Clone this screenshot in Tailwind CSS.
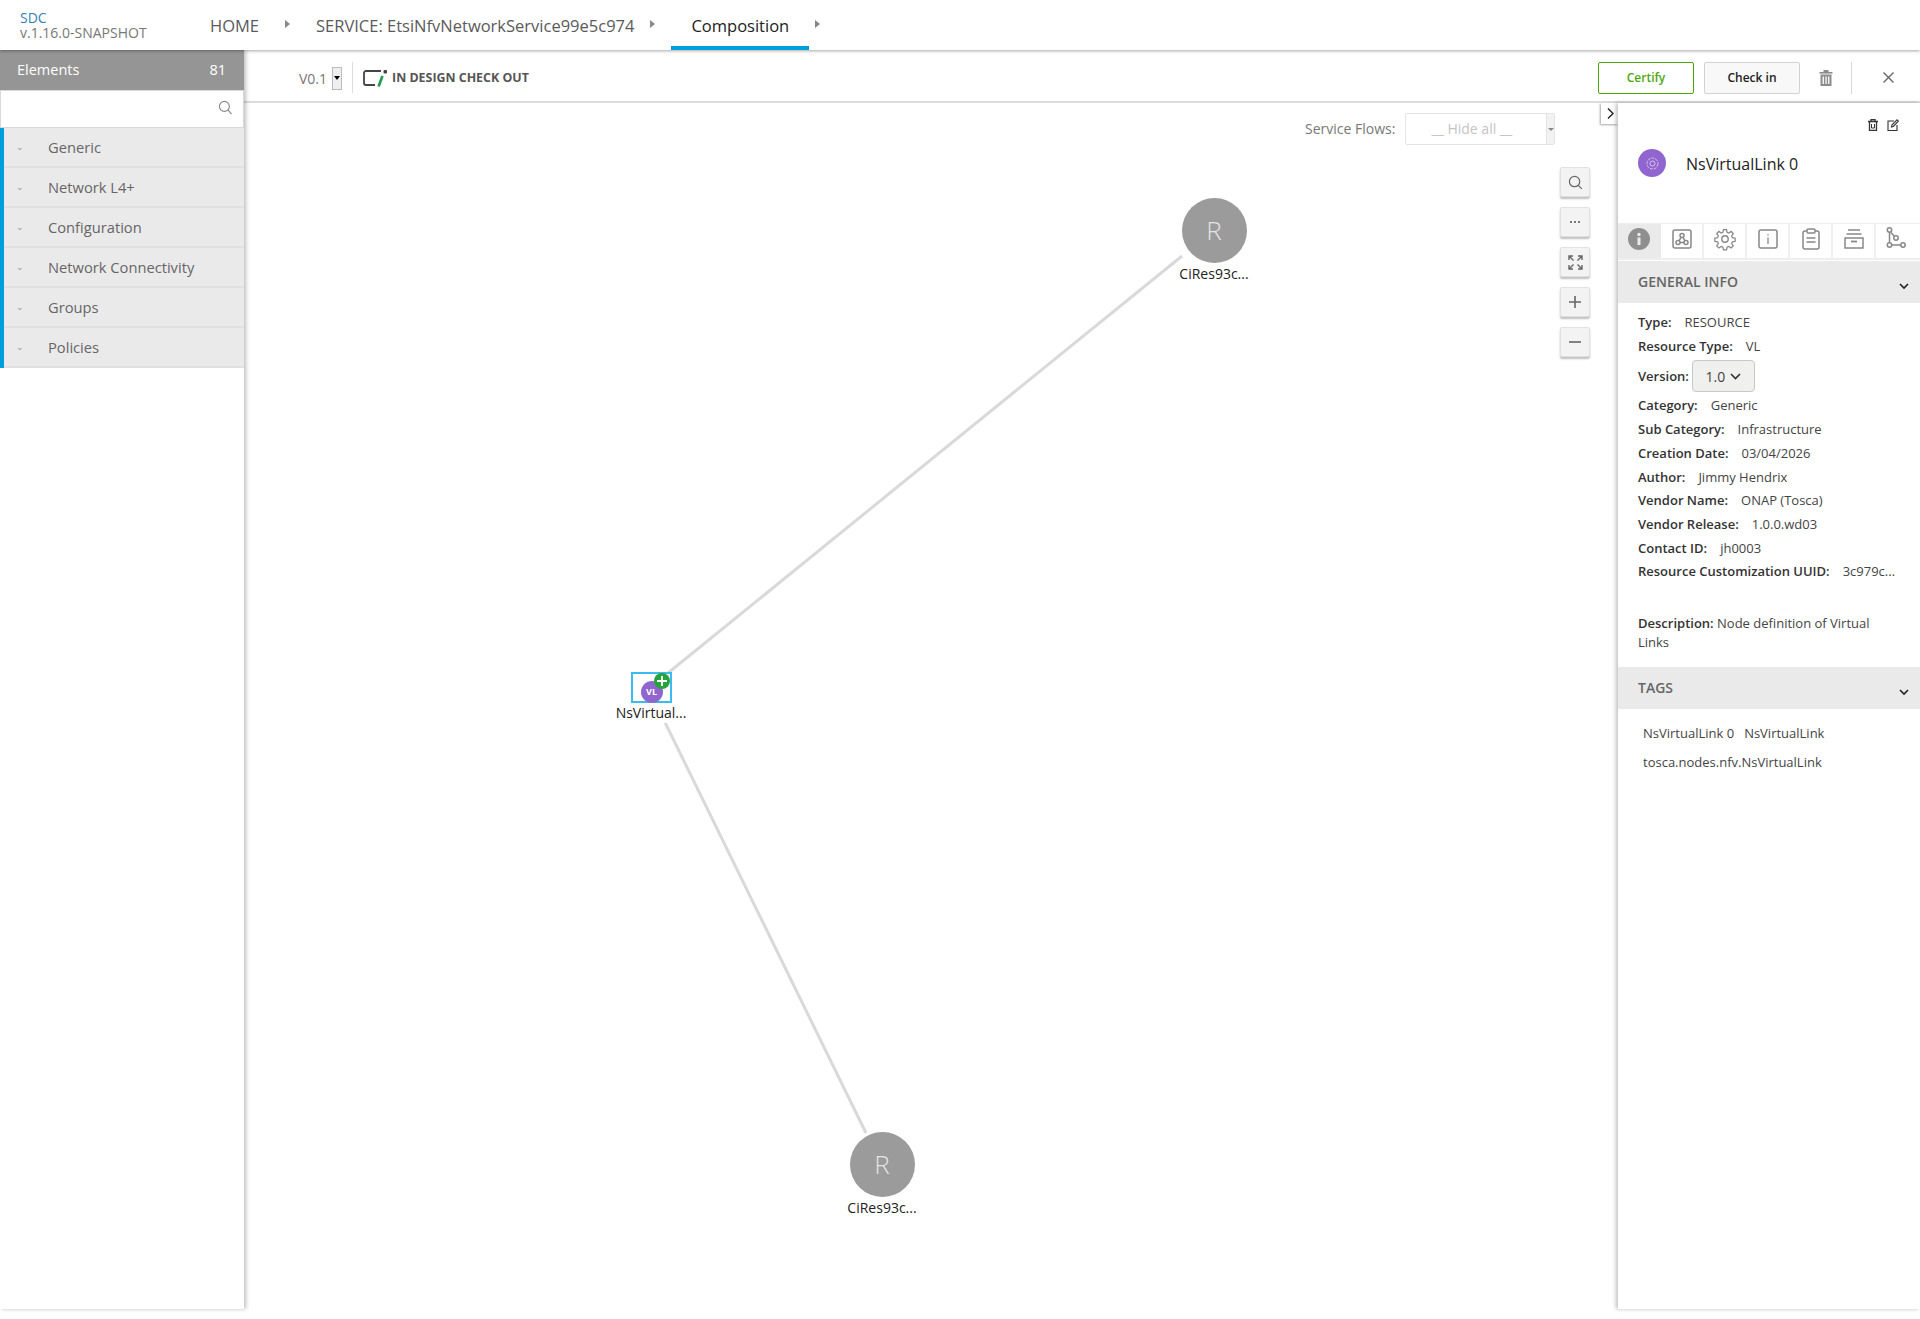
<!DOCTYPE html>
<html lang="en">
<head>
    <meta charset="UTF-8">
    <title>SDC - Composition</title>
    <script src="https://cdn.jsdelivr.net/npm/@tailwindcss/browser@4"></script>
</head>
<body class="bg-white font-['Open_Sans',sans-serif] text-[13px] text-[#333] h-[1319px] overflow-hidden">
    <!-- top nav -->
    <header class="relative z-20 h-[50px] bg-white shadow-[0_1px_3px_rgba(0,0,0,0.35)] flex items-stretch">
        <div class="w-[210px] pl-[20px] pt-[10px] text-[14px] leading-[15px]">
            <div class="text-[#3a7fb8]">SDC</div>
            <div class="text-[#777]">v.1.16.0-SNAPSHOT</div>
        </div>
        <nav class="flex items-stretch text-[16.5px] text-[#5a5a5a]">
            <div class="flex items-center h-full pt-[2px]">HOME</div>
            <div class="w-[57px] flex justify-center pt-[20px]"><div class="w-0 h-0 border-y-[4px] border-y-transparent border-l-[5px] border-l-[#888] -ml-[1px]"></div></div>
            <div class="flex items-center h-full pt-[2px]">SERVICE: EtsiNfvNetworkService99e5c974</div>
            <div class="w-[37px] flex justify-center pt-[20px]"><div class="w-0 h-0 border-y-[4px] border-y-transparent border-l-[5px] border-l-[#888]"></div></div>
            <div class="flex items-center h-full pt-[6px] px-[20px] border-b-[4px] border-[#009fdb] text-[#222] font-medium">Composition</div>
            <div class="w-[16px] flex justify-center pt-[20px]"><div class="w-0 h-0 border-y-[4px] border-y-transparent border-l-[5px] border-l-[#888]"></div></div>
        </nav>
    </header>

    <div class="flex h-[1259px]">
        <!-- palette -->
        <aside class="relative z-10 w-[244px] shrink-0 bg-white shadow-[2px_0_4px_rgba(0,0,0,0.25)]">
            <div class="h-[40px] bg-[#959595] text-white text-[14.5px] font-medium flex items-center justify-between pl-[17px] pr-[18px] pb-[1px]">
                <span>Elements</span><span>81</span>
            </div>
            <div class="h-[38px] border border-[#d8d8d8] flex items-center justify-end pr-[10px] pb-[4px]">
                <svg class="w-[15px] h-[15px] text-[#888]" viewBox="0 0 16 16" fill="none" stroke="currentColor" stroke-width="1.2"><circle cx="6.8" cy="6.8" r="5.3"/><path d="M10.6 10.6 14.5 15"/></svg>
            </div>
            <ul class="text-[14.7px] font-medium text-[#666] border-l-[4px] border-[#009fdb]">
                <li class="h-[40px] bg-[#eaeaea] border-b-2 border-[#e0e0e0] flex items-center"><span class="w-[44px] pl-[12px] text-[#999] text-[9px]">⌄</span>Generic</li>
                <li class="h-[40px] bg-[#eaeaea] border-b-2 border-[#e0e0e0] flex items-center"><span class="w-[44px] pl-[12px] text-[#999] text-[9px]">⌄</span>Network L4+</li>
                <li class="h-[40px] bg-[#eaeaea] border-b-2 border-[#e0e0e0] flex items-center"><span class="w-[44px] pl-[12px] text-[#999] text-[9px]">⌄</span>Configuration</li>
                <li class="h-[40px] bg-[#eaeaea] border-b-2 border-[#e0e0e0] flex items-center"><span class="w-[44px] pl-[12px] text-[#999] text-[9px]">⌄</span>Network Connectivity</li>
                <li class="h-[40px] bg-[#eaeaea] border-b-2 border-[#e0e0e0] flex items-center"><span class="w-[44px] pl-[12px] text-[#999] text-[9px]">⌄</span>Groups</li>
                <li class="h-[40px] bg-[#eaeaea] border-b-2 border-[#e0e0e0] flex items-center"><span class="w-[44px] pl-[12px] text-[#999] text-[9px]">⌄</span>Policies</li>
            </ul>
        </aside>

        <div class="flex-1 flex flex-col min-w-0">
            <!-- toolbar -->
            <div class="h-[53px] shrink-0 border-b-2 border-[#dcdcdc] flex items-center pt-[4px] pl-[55px] pr-[26px]">
                <span class="text-[14px] text-[#777] pt-[1px]">V0.1</span>
                <div class="ml-[5px] mt-[1px] w-[10px] h-[23px] bg-[#efefef] border border-[#bbb] flex items-center justify-center"><div class="w-0 h-0 border-x-[3px] border-x-transparent border-t-[4px] border-t-black"></div></div>
                <div class="ml-[10px] w-px h-[31px] bg-[#ddd]"></div>
                <svg class="ml-[10px] mt-[1px] w-[25px] h-[18px]" viewBox="0 0 25 18" fill="none"><path d="M18 2H3a2 2 0 0 0-2 2v10a2 2 0 0 0 2 2h9" stroke="#444" stroke-width="1.8"/><path d="M19.500 7 15.500 17.500" stroke="#1f9a4c" stroke-width="2.600"/><rect x="20.500" y="1" width="3.500" height="3.500" rx="1" fill="#444"/></svg>
                <span class="ml-[4px] pt-[2px] text-[12.4px] font-bold text-[#555]">IN DESIGN CHECK OUT</span>
                <div class="ml-auto flex items-center">
                    <button class="w-[96px] h-[32px] pt-[1px] border border-[#4ca90c] rounded-[2px] text-[#4ca90c] text-[12px] font-semibold">Certify</button>
                    <button class="ml-[10px] w-[96px] h-[32px] pt-[1px] bg-[#f8f8f8] border border-[#d2d2d2] rounded-[2px] text-[#222] text-[12px] font-semibold">Check in</button>
                    <svg class="ml-[19px] w-[14px] h-[16px] text-[#8c8c8c]" viewBox="0 0 14 16" fill="currentColor"><rect x="0.5" y="2" width="13" height="1.6"/><rect x="4.5" y="0" width="5" height="2.2"/><path d="M1.5 4.5h11V16h-11zM3.6 6.5v7.6h1.3V6.5zM6.4 6.500v7.6h1.3V6.500zM9.1 6.500v7.6h1.3V6.500z" fill-rule="evenodd"/></svg>
                    <div class="ml-[18px] w-px h-[32px] bg-[#d8d8d8]"></div>
                    <svg class="ml-[31px] w-[11px] h-[11px] text-[#666]" viewBox="0 0 11 11" fill="none" stroke="currentColor" stroke-width="1.4"><path d="M.5.5l10 10M10.500.5l-10 10"/></svg>
                </div>
            </div>

            <div class="flex-1 flex min-h-0">
                <!-- canvas -->
                <main class="relative flex-1 min-w-0">
                    <svg class="absolute inset-0 w-[1374px] h-[1206px]" viewBox="244 103 1374 1206">
                        <path d="M668 673 1182 256M657 706 866 1133" stroke="#d9d9d9" stroke-width="3" fill="none"/>
                    </svg>

                    <div class="absolute left-[1061px] top-[10px] w-[250px] flex items-center text-[14px] text-[#777]">
                        <span class="w-[100px] pb-[1px]">Service Flows:</span>
                        <div class="relative w-[151px] h-[32px] border border-[#e4e4e4] rounded-[2px] text-[#c4c4c4] flex items-center pl-[26px] pb-[1px]">__ Hide all __
                            <div class="absolute right-0 top-0 bottom-0 w-[8px] bg-[#f2f2f2] border-l border-[#e4e4e4] flex items-center justify-center"><div class="w-0 h-0 border-x-[3px] border-x-transparent border-t-[3px] border-t-[#888]"></div></div>
                        </div>
                    </div>

                    <!-- zoom controls -->
                    <div class="absolute left-[1316px] top-[64px] flex flex-col gap-[10px] text-[#666]">
                        <div class="w-[30px] h-[30px] bg-[#f3f3f3] border border-[#e2e2e2] rounded-[2px] shadow-[0_2px_2px_rgba(0,0,0,0.25)] flex items-center justify-center">
                            <svg class="w-[15px] h-[15px]" viewBox="0 0 16 16" fill="none" stroke="currentColor" stroke-width="1.3"><circle cx="7" cy="7" r="5.5"/><path d="M11 11l3.8 3.8"/></svg>
                        </div>
                        <div class="w-[30px] h-[30px] bg-[#f3f3f3] border border-[#e2e2e2] rounded-[2px] shadow-[0_2px_2px_rgba(0,0,0,0.25)] flex items-center justify-center gap-[2px]">
                            <span class="w-[2px] h-[2px] bg-[#777]"></span><span class="w-[2px] h-[2px] bg-[#777]"></span><span class="w-[2px] h-[2px] bg-[#777]"></span>
                        </div>
                        <div class="w-[30px] h-[30px] bg-[#f3f3f3] border border-[#e2e2e2] rounded-[2px] shadow-[0_2px_2px_rgba(0,0,0,0.25)] flex items-center justify-center">
                            <svg class="w-[15px] h-[15px]" viewBox="0 0 15 15" fill="none" stroke="currentColor" stroke-width="1.4"><path d="M1 5V1h4M10 1h4v4M14 10v4h-4M5 14H1v-4M1.500 1.500 5.500 5.500M13.500 1.500 9.500 5.500M13.500 13.500 9.500 9.500M1.500 13.500 5.500 9.500"/></svg>
                        </div>
                        <div class="w-[30px] h-[30px] bg-[#f3f3f3] border border-[#e2e2e2] rounded-[2px] shadow-[0_2px_2px_rgba(0,0,0,0.25)] flex items-center justify-center">
                            <svg class="w-[12px] h-[12px]" viewBox="0 0 12 12" stroke="currentColor" stroke-width="1.6"><path d="M6 0v12M0 6h12"/></svg>
                        </div>
                        <div class="w-[30px] h-[30px] bg-[#f3f3f3] border border-[#e2e2e2] rounded-[2px] shadow-[0_2px_2px_rgba(0,0,0,0.25)] flex items-center justify-center">
                            <svg class="w-[12px] h-[12px]" viewBox="0 0 12 12" stroke="currentColor" stroke-width="1.6"><path d="M0 6h12"/></svg>
                        </div>
                    </div>

                    <!-- nodes -->
                    <div class="absolute left-[923px] top-[95px] w-[94px] flex flex-col items-center">
                        <div class="w-[65px] h-[65px] rounded-full bg-[#9b9b9b] text-[#e4e4e4] text-[26px] font-light flex items-center justify-center">R</div>
                        <div class="mt-[1px] text-[14px] text-[#222] leading-[20px] bg-white">CiRes93c...</div>
                    </div>
                    <div class="absolute left-[591px] top-[1029px] w-[94px] flex flex-col items-center">
                        <div class="w-[65px] h-[65px] rounded-full bg-[#9b9b9b] text-[#e4e4e4] text-[26px] font-light flex items-center justify-center">R</div>
                        <div class="mt-[1px] text-[14px] text-[#222] leading-[20px] bg-white">CiRes93c...</div>
                    </div>
                    <div class="absolute left-[357px] top-[569px] w-[100px] flex flex-col items-center">
                        <div class="relative w-[41px] h-[31px] border-2 border-[#3bbcf0] bg-white">
                            <div class="absolute left-[8px] top-[7px] w-[22px] h-[22px] rounded-full bg-[#9165cf] text-white text-[9px] font-bold flex items-center justify-center">VL</div>
                            <div class="absolute left-[21px] top-[-1px] w-[16px] h-[16px] rounded-full bg-[#28a23b] flex items-center justify-center">
                                <svg class="w-[10px] h-[10px]" viewBox="0 0 10 10" stroke="white" stroke-width="1.8"><path d="M5 0v10M0 5h10"/></svg>
                            </div>
                        </div>
                        <div class="text-[14px] text-[#222] leading-[20px] bg-white">NsVirtual...</div>
                    </div>

                    <div class="absolute right-0 top-0 w-[17px] h-[21px] pl-[1px] bg-white shadow-[-1px_1px_2px_rgba(0,0,0,0.35)] flex items-center justify-center">
                        <svg class="w-[7px] h-[11px]" viewBox="0 0 7 11" fill="none" stroke="#222" stroke-width="1.4"><path d="M1 .5 6 5.500 1 10.500"/></svg>
                    </div>
                </main>

                <!-- right panel -->
                <aside class="w-[302px] shrink-0 bg-white shadow-[-2px_0_4px_rgba(0,0,0,0.25)] relative h-[1206px]">
                    <div class="h-[120px] relative">
                        <svg class="absolute left-[250px] top-[16px] w-[10px] h-[12px]" viewBox="0 0 10 12" fill="none" stroke="#333" stroke-width="1.3"><path d="M0 2.500h10M3 2.500V.7h4v1.800M1.500 2.500V11.300h7V2.500"/><path d="M3.500 5v4h3V5" stroke-width="1"/></svg>
                        <svg class="absolute left-[269px] top-[16px] w-[12px] h-[12px]" viewBox="0 0 12 12" fill="none" stroke="#333" stroke-width="1.1"><path d="M7 2H1v9.500h9V6"/><path d="M4.500 8l.4-2L10 .8l1.400 1.400L6.300 7.500z"/></svg>
                        <div class="absolute left-[20px] top-[46px] w-[28px] h-[28px] rounded-full bg-[#9165cf] flex items-center justify-center">
                            <svg class="w-[13px] h-[13px]" viewBox="0 0 13 13" fill="none" stroke="#d8c8f0" stroke-width="1"><circle cx="6.500" cy="6.500" r="5.500" stroke-dasharray="3 1"/><circle cx="6.500" cy="6.500" r="2.500"/></svg>
                        </div>
                        <div class="absolute left-[68px] top-[50px] text-[16px] leading-[22px] text-[#222]">NsVirtualLink 0</div>
                    </div>

                    <!-- tabs -->
                    <div class="flex h-[37px] border-t border-b-2 border-[#eeeeee] text-[#888]">
                        <div class="w-[43px] bg-[#eaeaea] flex items-center justify-center pr-[1px] pb-[5px]">
                            <svg class="w-[22px] h-[22px]" viewBox="0 0 22 22"><circle cx="11" cy="11" r="11" fill="#8f8f8f"/><rect x="9.500" y="9.500" width="3" height="7.500" fill="#eaeaea"/><circle cx="11" cy="6.500" r="1.700" fill="#eaeaea"/></svg>
                        </div>
                        <div class="w-[43px] border-r-2 border-[#f0f0f0] flex items-center justify-center pb-[5px]">
                            <svg class="w-[20px] h-[20px]" viewBox="0 0 20 20" fill="none" stroke="currentColor" stroke-width="1.500"><rect x="1" y="1" width="18" height="18" rx="2"/><circle cx="10" cy="6.500" r="2"/><circle cx="6" cy="13.500" r="2"/><circle cx="14" cy="13.500" r="2"/><path d="M9 8.300 7 11.800M11 8.300l2 3.500M8 13.500h4"/></svg>
                        </div>
                        <div class="w-[43px] border-r-2 border-[#f0f0f0] flex items-center justify-center pb-[5px]">
                            <svg class="w-[24px] h-[24px]" viewBox="0 0 24 24" fill="none" stroke="currentColor" stroke-width="1.400"><circle cx="12" cy="12" r="3.200"/><path d="M10.300 1.500h3.400l.6 3.100 1.900.8 2.600-1.800 2.400 2.400-1.800 2.600.8 1.900 3.100.6v3.400l-3.100.6-.8 1.900 1.800 2.600-2.400 2.400-2.600-1.800-1.900.8-.6 3.100h-3.400l-.6-3.100-1.900-.8-2.600 1.800-2.400-2.400 1.800-2.600-.8-1.900-3.100-.6v-3.400l3.100-.6.8-1.900-1.800-2.600 2.400-2.400 2.600 1.800 1.900-.8z" transform="translate(1.200 1.200) scale(.9)"/></svg>
                        </div>
                        <div class="w-[43px] border-r-2 border-[#f0f0f0] flex items-center justify-center pb-[5px]">
                            <svg class="w-[20px] h-[20px]" viewBox="0 0 20 20" fill="none" stroke="currentColor" stroke-width="1.500"><rect x="1" y="1" width="18" height="18" rx="2"/><path d="M10 8.500V15" stroke-width="1.300"/><circle cx="10" cy="5.800" r=".8" fill="currentColor" stroke="none"/></svg>
                        </div>
                        <div class="w-[43px] border-r-2 border-[#f0f0f0] flex items-center justify-center pb-[5px] pl-[1px]">
                            <svg class="w-[18px] h-[22px]" viewBox="0 0 18 22" fill="none" stroke="currentColor" stroke-width="1.500"><path d="M5 3H3a2 2 0 0 0-2 2v14a2 2 0 0 0 2 2h12a2 2 0 0 0 2-2V5a2 2 0 0 0-2-2h-2"/><rect x="5" y="1" width="8" height="4" rx="1"/><path d="M4.500 10h9M4.500 14h9"/></svg>
                        </div>
                        <div class="w-[43px] border-r-2 border-[#f0f0f0] flex items-center justify-center pb-[5px] pl-[1px]">
                            <svg class="w-[20px] h-[20px]" viewBox="0 0 20 20" fill="none" stroke="currentColor" stroke-width="1.500"><path d="M4 1h12M2.500 5h15"/><rect x="1" y="9" width="18" height="10"/><path d="M7 12.500h6" stroke-width="1.800"/></svg>
                        </div>
                        <div class="w-[39px] flex items-center justify-center pb-[7px]">
                            <svg class="w-[20px] h-[22px]" viewBox="0 0 20 22" fill="none" stroke="currentColor" stroke-width="1.500"><circle cx="3.500" cy="3" r="2.200"/><circle cx="3.500" cy="18" r="2.200"/><circle cx="17" cy="18" r="2.200"/><circle cx="10" cy="11" r="2.200"/><path d="M3.500 5.200v10.600M5.700 18h9.100M5 5.500l3.500 4"/></svg>
                        </div>
                    </div>

                    <!-- general info -->
                    <div class="mt-px h-[42px] bg-[#eaeaea] flex items-center justify-between pl-[20px] pr-[11px] text-[14px] font-semibold text-[#666]">
                        <span class="pb-[2px]">GENERAL INFO</span>
                        <svg class="w-[10px] h-[7px] mt-[8px]" viewBox="0 0 10 7" fill="none" stroke="#222" stroke-width="1.600"><path d="M1 1l4 4 4-4"/></svg>
                    </div>
                    <div class="pl-[20px] pr-[20px] pt-[8px] text-[13px] text-[#444] leading-[23.7px]">
                        <div><b class="font-semibold text-[#333] mr-[13px]">Type:</b>RESOURCE</div>
                        <div><b class="font-semibold text-[#333] mr-[13px]">Resource Type:</b>VL</div>
                        <div class="flex items-center h-[36px]"><b class="font-semibold text-[#333] mr-[3px]">Version:</b>
                            <div class="w-[63px] h-[32px] bg-[#f0f0ee] border border-[#c8c8c8] rounded-[4px] flex items-center justify-center gap-[5px] text-[14px]">1.0
                                <svg class="w-[11px] h-[7px]" viewBox="0 0 11 7" fill="none" stroke="#333" stroke-width="1.600"><path d="M1 1l4.500 4.500L10 1"/></svg>
                            </div>
                        </div>
                        <div><b class="font-semibold text-[#333] mr-[13px]">Category:</b>Generic</div>
                        <div><b class="font-semibold text-[#333] mr-[13px]">Sub Category:</b>Infrastructure</div>
                        <div><b class="font-semibold text-[#333] mr-[13px]">Creation Date:</b>03/04/2026</div>
                        <div><b class="font-semibold text-[#333] mr-[13px]">Author:</b>Jimmy Hendrix</div>
                        <div><b class="font-semibold text-[#333] mr-[13px]">Vendor Name:</b>ONAP (Tosca)</div>
                        <div><b class="font-semibold text-[#333] mr-[13px]">Vendor Release:</b>1.0.0.wd03</div>
                        <div><b class="font-semibold text-[#333] mr-[13px]">Contact ID:</b>jh0003</div>
                        <div class="whitespace-nowrap"><b class="font-semibold text-[#333] mr-[13px]">Resource Customization UUID:</b>3c979c...</div>
                        <div class="mt-[30px] leading-[19px]"><b class="font-semibold text-[#333]">Description:</b> Node definition of Virtual</div>
                        <div class="leading-[19px]">Links</div>
                    </div>

                    <!-- tags -->
                    <div class="mt-[15px] h-[42px] bg-[#eaeaea] flex items-center justify-between pl-[20px] pr-[11px] text-[14px] font-semibold text-[#666]">
                        <span class="pb-[2px]">TAGS</span>
                        <svg class="w-[10px] h-[7px] mt-[8px]" viewBox="0 0 10 7" fill="none" stroke="#222" stroke-width="1.600"><path d="M1 1l4 4 4-4"/></svg>
                    </div>
                    <div class="pl-[25px] pt-[15px] text-[13px] text-[#444] leading-[19px]">
                        <div class="flex gap-[10px]"><span>NsVirtualLink 0</span><span>NsVirtualLink</span></div>
                        <div class="mt-[10px]">tosca.nodes.nfv.NsVirtualLink</div>
                    </div>
                </aside>
            </div>
        </div>
    </div>
</body>
</html>
